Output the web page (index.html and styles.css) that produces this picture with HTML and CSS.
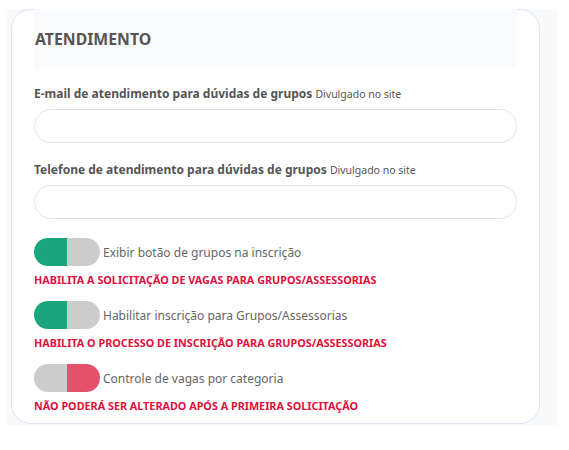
FILE: index.html
```html
<!DOCTYPE html>
<html lang="pt-BR">
<head>
    <meta charset="UTF-8">
    <meta name="viewport" content="width=device-width, initial-scale=1.0">
    <title>Atendimento</title>
    <link rel="stylesheet" href="styles.css">
</head>
<body>
    <div class="wrapper">
        <div class="card">
            <div class="card-header">
                <h2>ATENDIMENTO</h2>
            </div>

            <div class="field">
                <label for="email">E-mail de atendimento para dúvidas de grupos <small>Divulgado no site</small></label>
                <input type="text" id="email">
            </div>

            <div class="field">
                <label for="phone">Telefone de atendimento para dúvidas de grupos <small>Divulgado no site</small></label>
                <input type="text" id="phone">
            </div>

            <div class="option">
                <div class="switch">
                    <span class="switch-on"></span>
                    <span class="switch-off"></span>
                </div>
                <span class="option-label">Exibir botão de grupos na inscrição</span>
            </div>
            <p class="warning">HABILITA A SOLICITAÇÃO DE VAGAS PARA GRUPOS/ASSESSORIAS</p>

            <div class="option">
                <div class="switch">
                    <span class="switch-on"></span>
                    <span class="switch-off"></span>
                </div>
                <span class="option-label">Habilitar inscrição para Grupos/Assessorias</span>
            </div>
            <p class="warning">HABILITA O PROCESSO DE INSCRIÇÃO PARA GRUPOS/ASSESSORIAS</p>

            <div class="option">
                <div class="switch">
                    <span class="switch-off"></span>
                    <span class="switch-no"></span>
                </div>
                <span class="option-label">Controle de vagas por categoria</span>
            </div>
            <p class="warning">NÃO PODERÁ SER ALTERADO APÓS A PRIMEIRA SOLICITAÇÃO</p>
        </div>
    </div>
</body>
</html>
```

FILE: styles.css
```css
body {
    margin: 0;
    font-family: 'Noto Sans', sans-serif;
    background-color: #fff;
    color: #555;
}
.wrapper {
    margin: 9px 12px 0 7px;
    height: 416px;
    background-color: #f8f9fb;
    overflow: hidden;
}
.card {
    width: 529px;
    margin-left: 4px;
    height: 415px;
    box-sizing: border-box;
    background-color: #fff;
    border: 1px solid #dde5f0;
    border-radius: 20px;
    padding: 0 22px 0 22px;
}
.card-header {
    background-color: #fafbfc;
    height: 60px;
    display: flex;
    align-items: center;
    margin-top: -1px;
}
.card-header h2 {
    margin: 0 0 0 1px;
    font-size: 15.8px;
    font-weight: bold;
    color: #555;
}
.field {
    margin-top: 16px;
}
.field + .field {
    margin-top: 18px;
}
label {
    display: block;
    font-size: 12px;
    font-weight: bold;
    color: #555;
    margin-bottom: 7px;
}
label small {
    font-size: 10.5px;
    font-weight: normal;
}
input {
    display: block;
    width: 100%;
    height: 34px;
    box-sizing: border-box;
    border: 1px solid #dfe6ef;
    border-radius: 17px;
    padding: 0 14px;
    background-color: #fff;
}
.option {
    display: flex;
    align-items: center;
    gap: 3px;
    margin-top: 14px;
}
.field + .option {
    margin-top: 19px;
}
.switch {
    display: flex;
    width: 66px;
    height: 28px;
    border-radius: 14px;
    overflow: hidden;
}
.switch span {
    flex: 1;
}
.switch-on {
    background-color: #19a67f;
}
.switch-off {
    background-color: #cccccc;
}
.switch-no {
    background-color: #e5516b;
}
.option-label {
    font-size: 12px;
    color: #666;
}
.warning {
    margin: 6px 0 0 0;
    font-size: 10.8px;
    font-weight: bold;
    color: #e0103c;
}
```
